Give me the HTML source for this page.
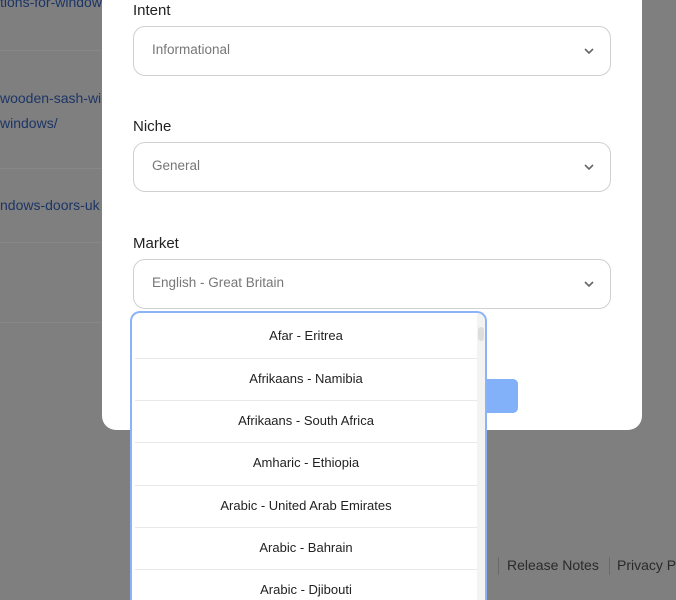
<!DOCTYPE html>
<html style="width:676px;height:600px;overflow:hidden"><head><style>
body{margin:0;width:676px;height:600px;overflow:hidden;background:#7f7f7f;font-family:"Liberation Sans",sans-serif;position:relative}
.ln{position:absolute;left:0;width:102px;height:1px;background:#878787}
.lt{position:absolute;color:#1d3566;font-size:14px;white-space:nowrap;overflow:hidden}
.modal{position:absolute;left:102px;top:-20px;width:540px;height:450px;background:#fff;border-radius:14px}
.lab{position:absolute;left:133px;font-size:15px;color:#222}
.sel{position:absolute;left:133px;width:476px;height:48px;border:1px solid #d0d0d0;border-radius:12px;background:#fff}
.sel span{position:absolute;left:18px;top:15px;font-size:13.5px;color:#777}
.sel svg{position:absolute;right:16px;top:20px}
.dd{position:absolute;left:130px;top:311px;width:353px;height:289px;border:2px solid #8ab4f8;border-bottom:none;border-radius:10px 10px 0 0;background:#fff;overflow:hidden}
.row{position:absolute;left:3px;width:342px;text-align:center;font-size:13px;color:#222;border-bottom:1px solid #e8e8e8}
</style></head><body>
<div class="lt" style="left:0;top:-6px;width:102px">tions-for-windows</div>
<div class="ln" style="top:50px"></div>
<div class="lt" style="left:0;top:90px;width:102px">wooden-sash-windows</div>
<div class="lt" style="left:0;top:115px;width:102px">windows/</div>
<div class="ln" style="top:168px"></div>
<div class="lt" style="left:0;top:197px;width:102px">ndows-doors-uk</div>
<div class="ln" style="top:242px"></div>
<div class="ln" style="top:322px"></div>
<div style="position:absolute;left:498px;top:557px;width:1px;height:18px;background:#6a6a6a"></div>
<div style="position:absolute;left:507px;top:557px;font-size:14px;color:#2a2a2a">Release Notes</div>
<div style="position:absolute;left:609px;top:557px;width:1px;height:18px;background:#6a6a6a"></div>
<div style="position:absolute;left:617px;top:557px;font-size:14px;color:#2a2a2a;white-space:nowrap">Privacy Policy</div>
<div class="modal"></div>
<div style="position:absolute;left:470px;top:379px;width:48px;height:34px;background:#82b1f9;border-radius:5px"></div>
<div class="lab" style="top:2px">Intent</div>
<div class="sel" style="top:26px"><span>Informational</span><svg width="10" height="8"><path d="M1 2l4 4 4-4" stroke="#666" stroke-width="1.6" fill="none"/></svg></div>
<div class="lab" style="top:118px">Niche</div>
<div class="sel" style="top:142px"><span>General</span><svg width="10" height="8"><path d="M1 2l4 4 4-4" stroke="#666" stroke-width="1.6" fill="none"/></svg></div>
<div class="lab" style="top:235px">Market</div>
<div class="sel" style="top:259px"><span>English - Great Britain</span><svg width="10" height="8"><path d="M1 2l4 4 4-4" stroke="#666" stroke-width="1.6" fill="none"/></svg></div>
<div class="dd">
<div style="position:absolute;left:345px;top:0;width:8px;height:300px;background:#f3f3f3"></div>
<div style="position:absolute;left:346px;top:14px;width:6px;height:14px;background:#ddd;border-radius:3px"></div>
<div class="row" style="top:3px;height:42px;line-height:40px">Afar - Eritrea</div>
<div class="row" style="top:46px;height:41px;line-height:40px">Afrikaans - Namibia</div>
<div class="row" style="top:88px;height:41px;line-height:40px">Afrikaans - South Africa</div>
<div class="row" style="top:130px;height:42px;line-height:40px">Amharic - Ethiopia</div>
<div class="row" style="top:173px;height:41px;line-height:40px">Arabic - United Arab Emirates</div>
<div class="row" style="top:215px;height:41px;line-height:40px">Arabic - Bahrain</div>
<div class="row" style="top:257px;height:41px;line-height:40px">Arabic - Djibouti</div>
</div>
</body></html>
